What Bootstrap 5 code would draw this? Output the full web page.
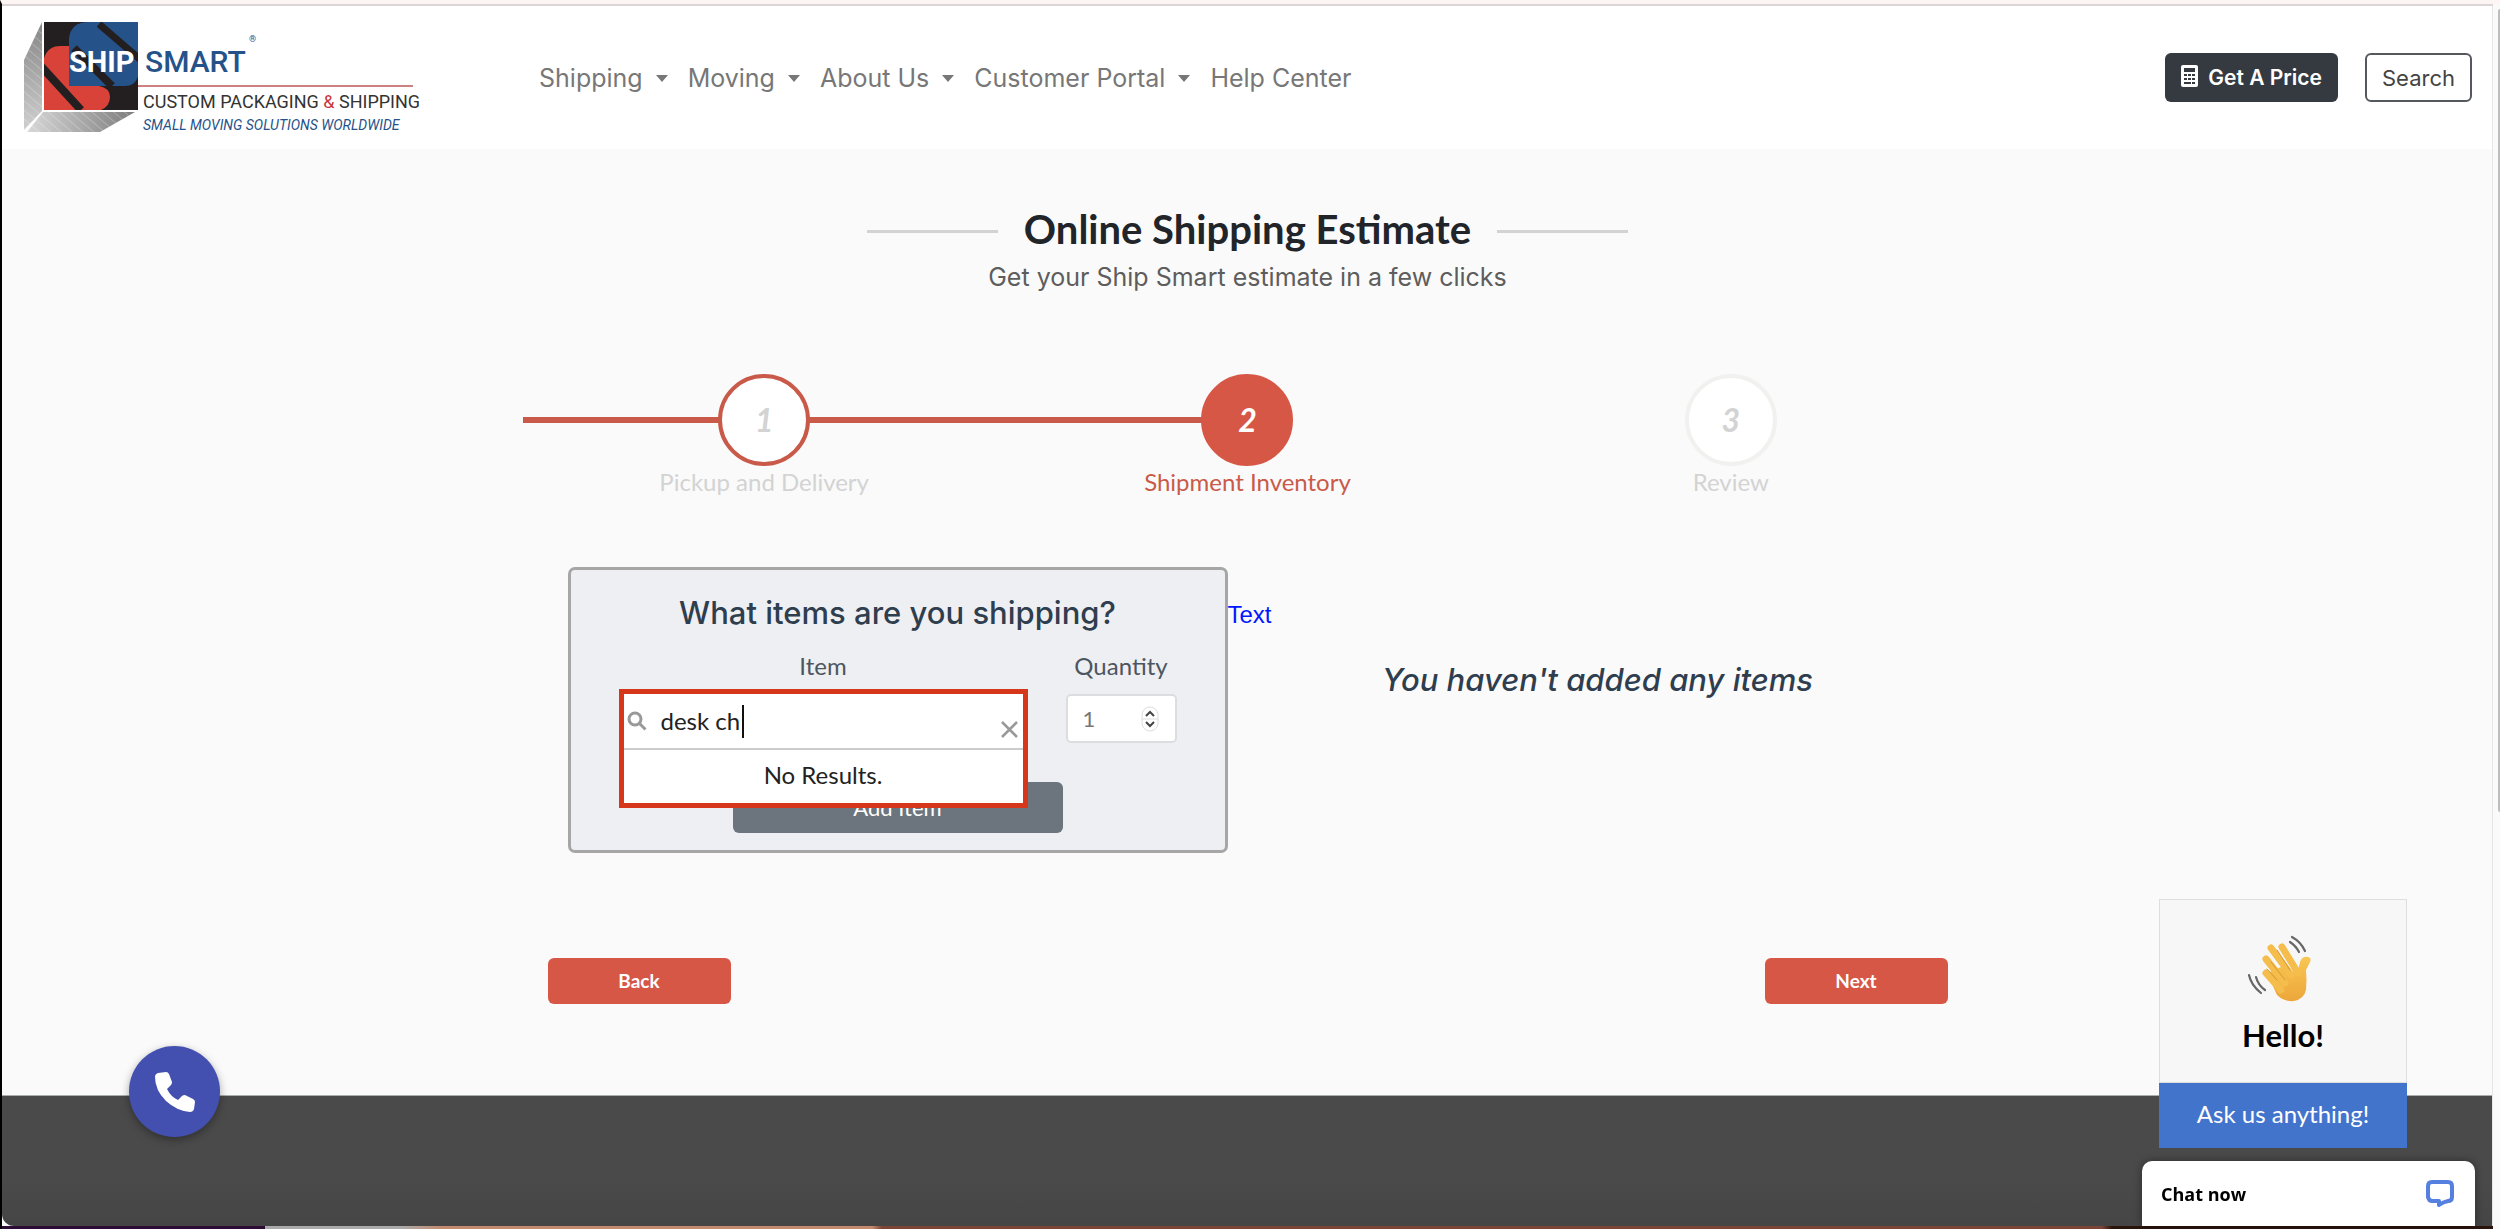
<!DOCTYPE html>
<html lang="en">
<head>
<meta charset="utf-8">
<meta name="viewport" content="width=device-width, initial-scale=1">
<title>Ship Smart - Online Shipping Estimate</title>
<link href="https://cdn.jsdelivr.net/npm/bootstrap@5.3.0/dist/css/bootstrap.min.css" rel="stylesheet">
<style>
:root{--brand-red:#d65745;--ink:#2f3e4e}
body{font-family:Lato,"Liberation Sans",sans-serif;background:#fafafa;font-size:24px;line-height:32px;color:#212529;overflow:hidden}
.shell{min-height:100vh;border-left:2px solid #000;border-top:4px solid #fcf5f4;padding-right:7px}
.poppy{font-family:Inter,"Open Sans",sans-serif}
.topbar{background:#fff;border-top:2px solid #dcd5d5;min-height:145px;padding:0 21px}
.brand-logo{width:396px;height:124px;margin-right:120px}
.main-links{gap:20px}
.main-links .nav-link{color:#777;padding:0;font-size:25px;line-height:32px}
.main-links .dropdown-toggle::after{margin-left:13px;border-top-width:7px;border-left-width:6px;border-right-width:6px;vertical-align:5px}
.btn-head{height:49px;font-size:22px;line-height:28px;border-radius:6px;padding:0 15px}
.btn-price{background:#343a40;color:#fff;font-weight:600;font-size:21px;gap:10px;margin-right:27px}
.btn-price:hover{background:#23272b;color:#fff}
.btn-find{border:2px solid #55595d;color:#444;background:#fff}
.headline{gap:26px;margin-top:56px}
.headline h1{font-size:40px;line-height:48px;font-weight:700}
.headline .rule{width:131px;height:3px;margin-top:5px;background:#d3d3d3}
.tagline{color:#5d5d5d;font-size:25px;line-height:32px;margin-top:8px}
.steps{max-width:1450px;margin-top:81px}
.step{position:relative;z-index:0;color:#d3d3d3}
.step.done::before,.step.current::before{content:"";position:absolute;z-index:-1;top:43px;left:0;height:6px;width:100%;background:#c95a49}
.step.current::before{width:50%}
.step-dot{width:92px;height:92px;border:4px solid #f1f1ef;background:#fff;font-size:32px;font-weight:700;font-style:italic;border-radius:50%}
.done .step-dot{border-color:#c95a49}
.current .step-dot{border-color:var(--brand-red);background:var(--brand-red);color:#fff}
.current{color:#c95a49}
.work{max-width:1400px;margin-top:69px}
.half{padding:0 20px}
.ask{position:relative;background:#eeeff2;border:3px solid #a6a6a7;border-radius:7px;padding:23px 48px 17px}
.ask h2,.none-yet{font-family:Inter,"Open Sans",sans-serif;font-size:31px;line-height:40px;font-weight:500;color:var(--ink)}
.ask h2{margin-bottom:17px}
.ask label{color:#4c5661;line-height:32px;margin-bottom:12px}
.item-col{width:409px}
.qty-col{width:111px}
.qty-box{height:49px;border:2px solid #dcdde0;border-radius:5px;background:#fff}
.qty-box input{width:60px;border:0;padding:0 0 0 15px;color:#777;font-size:22px;line-height:30px;background:transparent;appearance:textfield;-moz-appearance:textfield;outline:0}
.qty-box input::-webkit-inner-spin-button{appearance:none;margin:0}
.slot{position:relative;height:49px}
.finder{position:absolute;z-index:2;top:-5px;left:0;right:0;background:#fff;border:5px solid #d6361a}
.finder-row{height:56px;border-bottom:2px solid #ccc;padding:0 5px 0 3px}
.finder-row input{border:0;outline:0;color:#222;padding:0 0 0 14px;min-width:0;line-height:32px}
.finder-row svg{flex:none}
.typing{position:absolute;left:118px;top:11px;width:2px;height:33px;background:#111}
.none-found{height:53px;color:#222;padding-top:9px}
.btn-add{background:#6c757d;color:#fff;width:330px;height:51px;border-radius:6px;margin-top:39px;font-size:22px;line-height:30px}
.note{position:absolute;left:calc(100% + 3px);top:28px;color:#0017ff;font:24px/34px "Liberation Sans",Arial,sans-serif}
.none-yet{font-style:italic;margin-top:93px}
.moves{max-width:1400px;margin-top:105px}
.btn-move{background:var(--brand-red);color:#fff;font-size:19px;line-height:28px;font-weight:700;width:183px;height:46px;border-radius:6px}
.btn-move:hover{background:#bd4837;color:#fff}
.foot{background:linear-gradient(#4a4a4a 65%,#454545);border-top:1px solid #a9aeaa;margin-top:91px;border-bottom-left-radius:12px}
.desk{height:3px;background:linear-gradient(90deg,#2e0c35 0 263px,#aaa 263px 400px,#c58a6e 440px 870px,#7a4436 880px 2100px,#2b140c 2110px)}
.call{position:fixed;left:129px;bottom:92px;width:91px;height:91px;background:#4350af;box-shadow:0 3px 8px rgba(0,0,0,.35)}
.hello{position:fixed;right:93px;bottom:81px;width:248px;color:#000}
.hello-top{height:184px;background:#f7f7f7;border:1px solid #dedede;padding-top:33px;font:700 31px/40px Lato,sans-serif}
.hello-ask{background:#4374cc;color:#fff;height:65px;border:0;padding-bottom:5px;font-size:24px}
.chatbar{position:fixed;right:25px;bottom:3px;width:333px;height:65px;background:#fff;border:0;border-radius:10px 10px 0 0;padding:0 20px 0 19px;font:700 18px/28px "Open Sans","Noto Sans",sans-serif;color:#000;box-shadow:0 0 8px rgba(0,0,0,.4)}
.thumb{position:fixed;right:0;top:9px;width:2px;height:803px;background:#bdbdbd;border-radius:2px 0 0 2px}
.track{position:fixed;right:0;top:6px;bottom:3px;width:8px;background:#fafafa;border-left:1px solid #e6e6e6}
</style>
<script src="https://cdn.jsdelivr.net/npm/bootstrap@5.3.0/dist/js/bootstrap.bundle.min.js"></script>
</head>
<body>
<div class="shell d-flex flex-column">
<header class="topbar d-flex align-items-center">
  <a href="#" class="flex-shrink-0" aria-label="Ship Smart home">
  <svg class="brand-logo d-block" viewBox="22 16 396 124">
    <defs>
      <linearGradient id="side" x1="0" y1="0" x2="0" y2="1"><stop offset="0" stop-color="#858585"/><stop offset="1" stop-color="#cfcfcf"/></linearGradient>
      <linearGradient id="base" x1="0" y1="0" x2="1" y2="0"><stop offset="0" stop-color="#d8d8d8"/><stop offset="1" stop-color="#7c7c7c"/></linearGradient>
      <pattern id="hatch" width="7" height="7" patternUnits="userSpaceOnUse" patternTransform="rotate(-50)"><path d="M0 0V7" stroke="#fff" stroke-width="1" opacity=".45"/></pattern>
      <clipPath id="sq"><path d="M43 22h94v88H43z"/></clipPath>
    </defs>
    <path d="M41 22L23 60v70l18-19z" fill="url(#side)"/><path d="M41 22L23 60v70l18-19z" fill="url(#hatch)"/>
    <path d="M42 112h92l-35 20H26z" fill="url(#base)"/><path d="M42 112h92l-35 20H26z" fill="url(#hatch)"/>
    <path d="M43 22h94v88H43z" fill="#231f20"/>
    <g clip-path="url(#sq)">
      <path d="M43 58q4-12 16-12h11v40h28q11 2 11 11 0 9-9 13H43z" fill="#d84238"/>
      <path d="M68 86V38q2-16 20-16h50v50q-2 14-14 14z" fill="#26528a"/>
      <path d="M38 64l42 46M73 48l38 38" stroke="#231f20" stroke-width="8" fill="none"/>
      <path d="M98 24l44 38" stroke="#231f20" stroke-width="7"/>
    </g>
    <path d="M137 86h275" stroke="#bd5656" stroke-width="1.500"/>
    <g font-family="Roboto,sans-serif">
      <text x="68" y="72" font-size="29" font-weight="700" fill="#fff">SHIP</text>
      <text x="144" y="72" font-size="30" font-weight="500" fill="#26528a">SMART</text>
      <text x="248" y="42" font-size="9" fill="#26528a">®</text>
      <text x="142" y="108" font-size="18" fill="#333">CUSTOM PACKAGING <tspan fill="#c9353a">&amp;</tspan> SHIPPING</text>
      <text x="142" y="130" font-size="14" font-style="italic" fill="#26528a">SMALL MOVING SOLUTIONS WORLDWIDE</text>
    </g>
  </svg></a>
  <nav class="main-links nav flex-nowrap poppy">
    <a class="nav-link dropdown-toggle" href="#">Shipping</a>
    <a class="nav-link dropdown-toggle" href="#">Moving</a>
    <a class="nav-link dropdown-toggle" href="#">About Us</a>
    <a class="nav-link dropdown-toggle" href="#">Customer Portal</a>
    <a class="nav-link" href="#">Help Center</a>
  </nav>
  <div class="ms-auto d-flex poppy">
    <button type="button" class="btn btn-head btn-price d-flex align-items-center"><svg class="mb-1" width="17" height="22" viewBox="0 0 17 22"><rect width="17" height="22" rx="2" fill="#fff"/><path d="M3 3h11v4H3zM3 9h3v2H3zM7 9h3v2H7zM11 9h3v2h-3zM3 13h3v2H3zM7 13h3v2H7zM11 13h3v2h-3zM3 17h7v2H3zM11 17h3v2h-3z" fill="#343a40"/></svg>Get A Price</button>
    <button type="button" class="btn btn-head btn-find">Search</button>
  </div>
</header>
<main>
  <div class="headline d-flex justify-content-center align-items-center"><span class="rule"></span><h1 class="m-0">Online Shipping Estimate</h1><span class="rule"></span></div>
  <p class="tagline poppy text-center mb-0">Get your Ship Smart estimate in a few clicks</p>
  <div class="steps row g-0 mx-auto text-center">
    <div class="step done col-4"><div class="step-dot mx-auto d-flex align-items-center justify-content-center">1</div>Pickup and Delivery</div>
    <div class="step current col-4"><div class="step-dot mx-auto d-flex align-items-center justify-content-center">2</div>Shipment Inventory</div>
    <div class="step col-4"><div class="step-dot mx-auto d-flex align-items-center justify-content-center">3</div>Review</div>
  </div>
  <div class="work row g-0 mx-auto text-center">
    <div class="col-6 half">
      <form class="ask">
        <h2>What items are you shipping?</h2>
        <div class="d-flex justify-content-between">
          <div class="item-col">
            <label for="item">Item</label>
            <div class="slot"><div class="finder">
              <div class="finder-row d-flex align-items-center">
                <svg width="20" height="20" viewBox="0 0 20 20" fill="none" stroke="#999" stroke-width="3"><circle cx="8" cy="8" r="6"/><path d="M12.500 12.500l6 6"/></svg>
                <input id="item" type="text" class="flex-grow-1" value="desk ch" autocomplete="off">
                <svg class="mt-3" width="17" height="17" viewBox="0 0 17 17" stroke="#999" stroke-width="2.500"><path d="M1 1l15 15M16 1L1 16"/></svg>
              </div>
              <span class="typing"></span>
              <div class="none-found">No Results.</div>
            </div></div>
          </div>
          <div class="qty-col">
            <label for="qty">Quantity</label>
            <div class="qty-box d-flex align-items-center justify-content-between">
              <input id="qty" type="number" value="1">
              <svg class="me-3" width="18" height="26" viewBox="0 0 18 26"><rect x="1" y="1" width="16" height="24" rx="8" fill="#fff" stroke="#ddd"/><path d="M1 13h16" stroke="#ddd"/><path d="M5 10l4-4 4 4M5 16l4 4 4-4" fill="none" stroke="#444" stroke-width="2"/></svg>
            </div>
          </div>
        </div>
        <button type="button" class="btn btn-add p-0">Add Item</button>
        <span class="note">Text</span>
      </form>
    </div>
    <div class="col-6 half"><p class="none-yet mb-0">You haven't added any items</p></div>
  </div>
  <div class="moves d-flex justify-content-between mx-auto">
    <button type="button" class="btn btn-move p-0">Back</button>
    <button type="button" class="btn btn-move p-0">Next</button>
  </div>
</main>
<footer class="foot flex-grow-1"></footer>
<div class="desk"></div>
</div>
<div class="track"></div><div class="thumb"></div>
<a href="#" class="call rounded-circle d-flex align-items-center justify-content-center" aria-label="Call us"><svg width="40" height="40" viewBox="0 0 40 40" fill="#fff"><path d="M3 1L11 0q2 0 3 2l3 8q0 2-1 3l-4 4q4 8 11 11l4-4q1-1 3-1l8 4q2 1 2 3l-1 7q-1 3-4 3Q22 39 11 29 0 18 0 5 0 2 3 1z"/></svg></a>
<section class="hello text-center">
  <div class="hello-top">
    <svg class="d-block mx-auto mb-2" width="74" height="74" viewBox="0 0 74 74" fill="none" stroke-linecap="round">
      <defs><linearGradient id="skin" x1="0" y1="0" x2="0" y2="1"><stop offset="0" stop-color="#f8c653"/><stop offset="1" stop-color="#eda63a"/></linearGradient></defs>
      <path d="M21 40L35 34 46 39 52 37q1-3 2-8 2-6 8-5 4 1 2 5l-4 8q1 10 0 20-2 9-12 11-10 1-17-6z" fill="url(#skin)"/>
      <path d="M20 40l15 17M20 26l19 24M25 15l20 27M36 14l16 26" stroke="#f5bd4c" stroke-width="7"/>
      <path d="M25 29l14 18M31 17l13 20M21 36l10 11" stroke="#d99532" stroke-width="1"/>
      <path d="M44 9q6 4 9 10M46 4q9 5 13 14M10 44q2 8 9 13M3 42q2 10 12 18" stroke="#666" stroke-width="2.200"/>
    </svg>Hello!
  </div>
  <button type="button" class="hello-ask w-100">Ask us anything!</button>
</section>
<button type="button" class="chatbar d-flex align-items-center justify-content-between">Chat now<svg width="29" height="29" viewBox="0 0 29 29"><path d="M6 3h16q4 0 4 4v11q0 4-4 4-5 1-9 4v-4H6q-3 0-4-4V7q0-4 4-4z" fill="none" stroke="#5580e0" stroke-width="4" stroke-linejoin="round"/></svg></button>
</body>
</html>
